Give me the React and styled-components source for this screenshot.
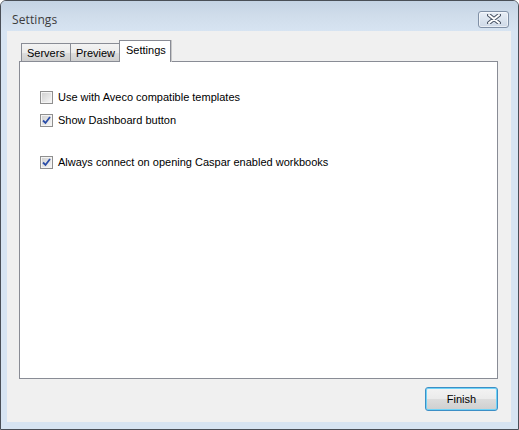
import React from "react";
import styled, { createGlobalStyle } from "styled-components";

const Global = createGlobalStyle`
  html, body { margin: 0; padding: 0; background: #ffffff; }
  body { font-family: "Liberation Sans", Arial, sans-serif; }
  * { box-sizing: border-box; }
`;

const Window = styled.div`
  width: 519px;
  height: 430px;
  border: 1px solid #4a4f57;
  border-radius: 6px 6px 0 0;
  background: #d7e4f2;
  display: flex;
  flex-direction: column;
  overflow: hidden;
`;

const TitleBar = styled.div`
  height: 30px;
  flex: none;
  display: flex;
  align-items: center;
  justify-content: space-between;
  padding: 6px 9px 0 11px;
  background: linear-gradient(#c4d3e4 0%, #cfdcea 45%, #d7e4f2 100%);
`;

const Title = styled.span`
  font-family: "Open Sans", "DejaVu Sans", sans-serif;
  font-size: 12px;
  color: #3c3c3c;
  letter-spacing: 0.1px;
`;

const CloseButton = styled.div`
  width: 31px;
  height: 17px;
  border: 1px solid #8090a6;
  border-radius: 3px;
  background: linear-gradient(#e8eef6 0%, #dbe4ef 50%, #ced9e7 100%);
  box-shadow: inset 0 0 0 1px rgba(255, 255, 255, 0.55);
  display: flex;
  align-items: center;
  justify-content: center;
`;

const Client = styled.div`
  flex: 1;
  margin: 0 7px 7px 6px;
  background: #f0f0f0;
  display: flex;
  flex-direction: column;
  padding: 9px 13px 10px 12px;
`;

const TabStrip = styled.div`
  display: flex;
  align-items: flex-end;
  padding-left: 2px;
  height: 22px;
  position: relative;
  z-index: 1;
`;

const Tab = styled.div`
  height: ${(p) => (p.$active ? "22px" : "19px")};
  margin-left: ${(p) => (p.$active ? "-2px" : "0")};
  margin-right: ${(p) => (p.$active ? "-2px" : "0")};
  padding: ${(p) => (p.$active ? "3px 4px 0 6px" : "3px 5px 0 5px")};
  border: 1px solid #898c95;
  border-bottom: ${(p) => (p.$active ? "none" : "1px solid #898c95")};
  border-left-width: ${(p) => (p.$first || p.$active ? "1px" : "0")};
  background: ${(p) =>
    p.$active
      ? "#ffffff"
      : "linear-gradient(#f3f3f3 0%, #ebebeb 50%, #dddddd 50%, #cfcfcf 100%)"};
  font-size: 11px;
  color: #000;
  white-space: nowrap;
  box-shadow: ${(p) => (p.$active ? "1px 0 0 #c8c8c8" : "none")};
`;

const Panel = styled.div`
  height: 318px;
  margin-top: -1px;
  background: #ffffff;
  border: 1px solid #898c95;
  padding: 28px 20px 0 20px;
  display: flex;
  flex-direction: column;
`;

const Row = styled.label`
  display: flex;
  align-items: center;
  gap: 5px;
  height: 14px;
  margin-top: ${(p) => p.$gap || 0}px;
  font-size: 11px;
  color: #000;
`;

const Box = styled.span`
  width: 13px;
  height: 13px;
  flex: none;
  border: 1px solid #8f8f8f;
  background: #f4f4f4;
  padding: 1px;
  display: flex;
`;

const BoxInner = styled.span`
  flex: 1;
  background: linear-gradient(135deg, #d2d2d2 0%, #e6e6e6 60%, #f6f6f6 100%);
  display: flex;
  align-items: center;
  justify-content: center;
`;

const Footer = styled.div`
  display: flex;
  justify-content: flex-end;
  margin-top: 8px;
`;

const Button = styled.button`
  width: 73px;
  height: 24px;
  border: 1px solid #3c8fc6;
  border-radius: 3px;
  background: linear-gradient(#f3f3f3 0%, #ebebeb 48%, #dcdcdc 52%, #cfcfcf 100%);
  box-shadow: inset 0 0 0 1px #6fd3f7;
  font-family: "Liberation Sans", Arial, sans-serif;
  font-size: 11px;
  color: #000;
  padding: 0;
`;

const Check = () => (
  <svg width="9" height="9" viewBox="0 0 9 9">
    <path d="M1 4.5 L3.5 7 L8 1" fill="none" stroke="#2b4ea8" strokeWidth="1.8" />
  </svg>
);

const CheckBox = ({ checked }) => (
  <Box>
    <BoxInner>{checked && <Check />}</BoxInner>
  </Box>
);

const CloseGlyph = () => (
  <svg width="14" height="10" viewBox="0 0 14 10">
    <path d="M2 1 L12 9 M12 1 L2 9" stroke="#4a5566" strokeWidth="4" strokeLinecap="round" />
    <path d="M2 1 L12 9 M12 1 L2 9" stroke="#ffffff" strokeWidth="2" strokeLinecap="round" />
  </svg>
);

export default function App() {
  return (
    <>
      <Global />
      <Window>
        <TitleBar>
          <Title>Settings</Title>
          <CloseButton>
            <CloseGlyph />
          </CloseButton>
        </TitleBar>
        <Client>
          <TabStrip>
            <Tab $first>Servers</Tab>
            <Tab>Preview</Tab>
            <Tab $active>Settings</Tab>
          </TabStrip>
          <Panel>
            <Row>
              <CheckBox />
              Use with Aveco compatible templates
            </Row>
            <Row $gap={9}>
              <CheckBox checked />
              Show Dashboard button
            </Row>
            <Row $gap={28}>
              <CheckBox checked />
              Always connect on opening Caspar enabled workbooks
            </Row>
          </Panel>
          <Footer>
            <Button>Finish</Button>
          </Footer>
        </Client>
      </Window>
    </>
  );
}
